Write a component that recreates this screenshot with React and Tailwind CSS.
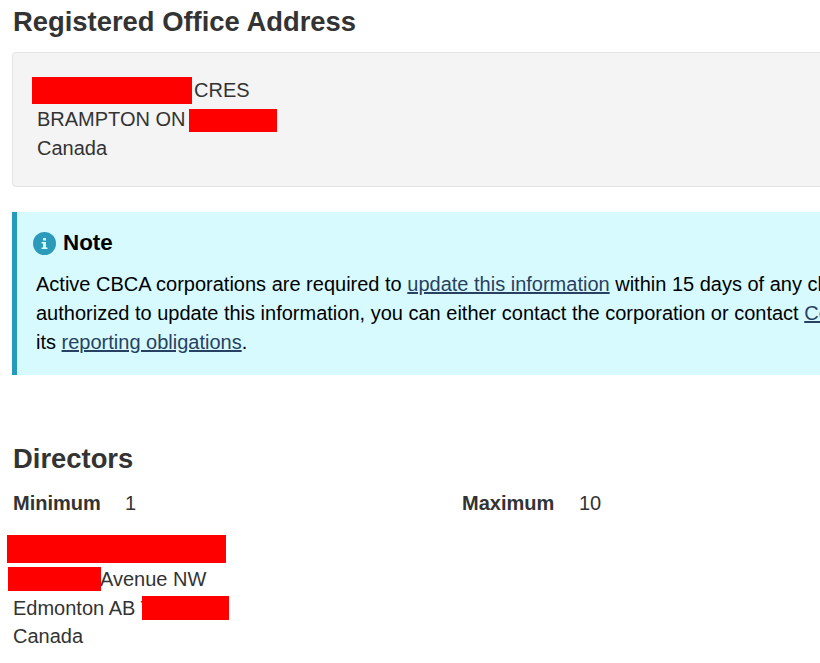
const Redacted = ({ className }) => <div className={`absolute bg-[#ff0000] ${className}`} />;

const InfoIcon = () => (
  <svg viewBox="0 0 23 23" className="w-[23px] h-[23px] shrink-0">
    <circle cx="11.5" cy="11.5" r="11.5" fill="#2b9abb" />
    <path d="M10 6h3v2.500h-3z M8.500 10h4.500v5.500h1.500v1.500h-6v-1.500h1.500v-4h-1.500z" fill="#d7faff" />
  </svg>
);

const NoteLink = ({ children }) => <a href="#" className="text-[#284162] underline">{children}</a>;

const App = () => {
  return (
    <div className="relative w-[820px] h-[663px] overflow-hidden bg-white font-['Liberation_Sans',Arial,sans-serif] text-[20px] leading-[28.750px] text-[#333333]">
      <div className="w-[1170px] pl-3">
        <h2 className="pt-[5px] pl-px text-[27.400px] leading-[34px] font-bold">Registered Office Address</h2>

        <div className="mt-[13px] h-[135px] rounded border border-[#e3e3e3] bg-[#f4f4f4] pl-6 pt-[23px]">
          <div><span className="inline-block w-[157px]" />CRES</div>
          <div>BRAMPTON ON</div>
          <div>Canada</div>
        </div>

        <div className="mt-[25px] h-[163px] border-l-[5px] border-[#269abc] bg-[#d7faff] pl-[19px] pt-[16px] text-black">
          <div className="flex items-center gap-[7px] -ml-[3px] h-[30px]">
            <InfoIcon />
            <h3 className="text-[22.400px] font-bold">Note</h3>
          </div>
          <p className="mt-[12px] whitespace-nowrap">
            Active CBCA corporations are required to <NoteLink>update this information</NoteLink> within 15 days of any change.
            <br />
            authorized to update this information, you can either contact the corporation or contact <NoteLink>Corporations Canada</NoteLink>
            <br />
            its <NoteLink>reporting obligations</NoteLink>.
          </p>
        </div>

        <h2 className="mt-[67px] pl-px text-[27.400px] leading-[34px] font-bold">Directors</h2>

        <div className="mt-[13px] flex pl-px">
          <div className="flex w-[449px]">
            <strong className="w-[112px] font-bold">Minimum</strong>
            <span>1</span>
          </div>
          <div className="flex">
            <strong className="w-[117px] font-bold">Maximum</strong>
            <span>10</span>
          </div>
        </div>

        <div className="mt-[47px] pl-px"><span className="inline-block w-[87px]" />Avenue NW</div>
        <div className="pl-px">Edmonton AB T</div>
        <div className="pl-px">Canada</div>
      </div>

      <Redacted className="left-[32px] top-[77px] w-[160px] h-[27px]" />
      <Redacted className="left-[189px] top-[109px] w-[88px] h-[23px]" />
      <Redacted className="left-[7px] top-[535px] w-[219px] h-[28px]" />
      <Redacted className="left-[8px] top-[567px] w-[93px] h-[24px]" />
      <Redacted className="left-[142px] top-[596px] w-[87px] h-[24px]" />
    </div>
  );
};

export default App;
